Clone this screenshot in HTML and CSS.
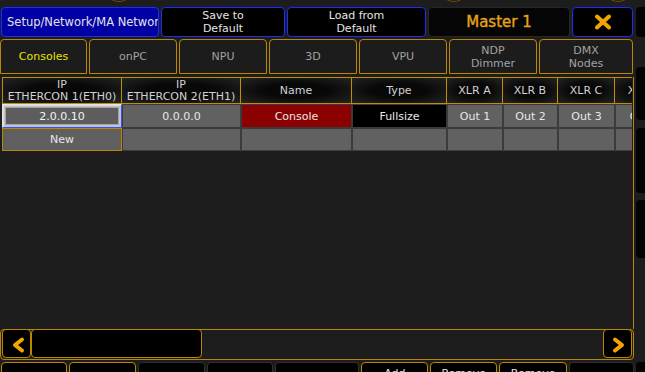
FILE: index.html
```html
<!DOCTYPE html>
<html lang="en">
<head>
    <meta charset="UTF-8">
    <title>Setup / Network / MA Network</title>
    <link rel="stylesheet" href="styles.css">
</head>
<body>
    <div class="screen">
        <div class="main">
            <div class="knobs">
                <span class="knob k1"></span>
                <span class="knob k2"></span>
                <span class="knob k3"></span>
            </div>

            <div class="titlebar">
                <div class="tbtn path">Setup/Network/MA Networ</div>
                <div class="tbtn save">Save to<br>Default</div>
                <div class="tbtn load">Load from<br>Default</div>
                <div class="tbtn master">Master 1</div>
                <div class="tbtn close">
                    <svg width="18" height="16" viewBox="0 0 18 16">
                        <path d="M3 2.5 L15 13.5 M15 2.5 L3 13.5" stroke="#f2a400" stroke-width="4" stroke-linecap="round"/>
                    </svg>
                </div>
            </div>

            <div class="tabs">
                <div class="tab active">Consoles</div>
                <div class="tab">onPC</div>
                <div class="tab">NPU</div>
                <div class="tab">3D</div>
                <div class="tab">VPU</div>
                <div class="tab">NDP<br>Dimmer</div>
                <div class="tab wide">DMX<br>Nodes</div>
            </div>

            <div class="panel">
                <div class="tablearea">
                    <div class="grid">
                        <div class="th first">IP<br>ETHERCON 1(ETH0)</div>
                        <div class="th">IP<br>ETHERCON 2(ETH1)</div>
                        <div class="th">Name</div>
                        <div class="th">Type</div>
                        <div class="th">XLR A</div>
                        <div class="th">XLR B</div>
                        <div class="th">XLR C</div>
                        <div class="th">XLR D</div>

                        <div class="td selected">2.0.0.10</div>
                        <div class="td">0.0.0.0</div>
                        <div class="td red">Console</div>
                        <div class="td black">Fullsize</div>
                        <div class="td">Out 1</div>
                        <div class="td">Out 2</div>
                        <div class="td">Out 3</div>
                        <div class="td">Out 4</div>

                        <div class="td new">New</div>
                        <div class="td"></div>
                        <div class="td"></div>
                        <div class="td"></div>
                        <div class="td"></div>
                        <div class="td"></div>
                        <div class="td"></div>
                        <div class="td"></div>
                    </div>
                </div>

                <div class="scroller">
                    <div class="sbtn left">
                        <svg width="29" height="29" viewBox="0 0 29 29">
                            <polyline points="19,9.5 12,15 19,20.5" fill="none" stroke="#f2a400" stroke-width="4" stroke-linecap="round" stroke-linejoin="round"/>
                        </svg>
                    </div>
                    <div class="thumb"></div>
                    <div class="track"></div>
                    <div class="sbtn right">
                        <svg width="29" height="29" viewBox="0 0 29 29">
                            <polyline points="11,9.5 18,15 11,20.5" fill="none" stroke="#f2a400" stroke-width="4" stroke-linecap="round" stroke-linejoin="round"/>
                        </svg>
                    </div>
                </div>
            </div>

            <div class="bottombar">
                <div class="bbtn lit"></div>
                <div class="bbtn lit w67"></div>
                <div class="bbtn w67"></div>
                <div class="bbtn"></div>
                <div class="bbtn w85"></div>
                <div class="bbtn lit w67">Add</div>
                <div class="bbtn lit w67">Remove</div>
                <div class="bbtn lit w68">Remove</div>
                <div class="bbtn w65"></div>
            </div>
        </div>

        <div class="side">
            <div class="sblock b1"></div>
            <div class="sblock b2"></div>
            <div class="sblock b3"></div>
            <div class="sblock b4"></div>
            <div class="sblock b5"></div>
        </div>
    </div>
</body>
</html>
```

FILE: styles.css
```css
body {
    margin: 0;
    width: 645px;
    height: 372px;
    overflow: hidden;
    background-color: #1d1d1d;
    font-family: "DejaVu Sans", sans-serif;
    font-size: 11px;
    color: #e0e0e0;
}
.screen {
    display: flex;
    height: 372px;
    overflow: hidden;
}
.main {
    width: 634px;
    display: flex;
    flex-direction: column;
}
.main > *,
.panel > *,
.side > * {
    flex-shrink: 0;
}

/* encoder rims peeking in from above */
.knobs {
    height: 7px;
    display: flex;
    overflow: hidden;
}
.knob {
    width: 18px;
    height: 10px;
    margin-top: -8px;
    border: 1px solid #6e4f0a;
    border-radius: 50%;
    box-sizing: border-box;
}
.k1 { margin-left: 110px; }
.k2 { margin-left: 317px; }
.k3 { margin-left: 146px; }

/* title bar */
.titlebar {
    height: 30px;
    display: flex;
    gap: 2px;
    padding-left: 1px;
}
.tbtn {
    box-sizing: border-box;
    height: 30px;
    border: 1px solid #1c2cff;
    border-radius: 4px;
    background: #000;
    display: flex;
    align-items: center;
    justify-content: center;
    text-align: center;
    line-height: 13px;
    color: #e4e4e4;
}
.path {
    width: 158px;
    background: #0000a4;
    justify-content: flex-start;
    padding-left: 5px;
    font-size: 11.5px;
    white-space: nowrap;
    overflow: hidden;
}
.save { width: 124px; }
.load { width: 139px; }
.master {
    width: 142px;
    border-color: #262626;
    background: #050505;
    color: #e3a21a;
    font-size: 15px;
    -webkit-text-stroke: 0.4px #e3a21a;
}
.close { width: 61px; }

/* tabs */
.tabs {
    height: 35px;
    margin-top: 2px;
    display: flex;
    gap: 2px;
}
.tab {
    box-sizing: border-box;
    width: 88px;
    border: 1px solid #b98800;
    border-radius: 4px 4px 0 0;
    background: #1c1c1c;
    display: flex;
    align-items: center;
    justify-content: center;
    text-align: center;
    line-height: 13px;
    color: #a2a2a2;
}
.tab.active {
    width: 87px;
    color: #e4e400;
}
.tab.wide { width: 94px; }

/* sheet */
.panel {
    margin-top: 3px;
    display: flex;
    flex-direction: column;
}
.tablearea {
    box-sizing: border-box;
    height: 252px;
    padding-left: 2px;
    padding-right: 1px;
    border-right: 1px solid #b98800;
    overflow: hidden;
}
.grid {
    display: grid;
    grid-template-columns: 120px 119px 111px 95px 56px 55px 57px 60px;
    grid-template-rows: 27px 24px 23px;
    width: 630px;
    overflow: hidden;
}
.th,
.td {
    box-sizing: border-box;
    display: flex;
    align-items: center;
    justify-content: center;
    text-align: center;
    white-space: nowrap;
    overflow: hidden;
}
.th {
    border-top: 1px solid #c08e00;
    border-bottom: 1px solid #c08e00;
    border-right: 1px solid #c08e00;
    background: radial-gradient(ellipse at center, #080808 40%, #242424 100%);
    color: #d2d2d2;
    line-height: 12px;
    padding-top: 1px;
}
.th.first { border-left: 1px solid #c08e00; }
.td {
    border: 1px solid #3b3b3b;
    background: #616161;
    color: #e8e8e8;
}
.td.red { background: #8b0000; }
.td.black { background: #000; }
.td.selected {
    border-left-color: #e6e6e6;
    border-top-color: #e6e6e6;
    border-right-color: #2e50ff;
    border-bottom-color: #2e50ff;
    background: #5d5d5d;
    box-shadow: inset 1px 1px 0 #d8d8d8, inset 0 0 0 2px #c4c4c4, inset 0 0 0 3px #a4a4a4;
    color: #f4f4f4;
}
.td.new {
    border-color: #b98800;
    background: #5f5f5f;
}

/* horizontal scroller */
.scroller {
    box-sizing: border-box;
    height: 31px;
    border: 1px solid #b98800;
    border-radius: 4px;
    display: flex;
}
.sbtn,
.thumb {
    box-sizing: border-box;
    height: 29px;
    margin-top: -1px;
    border: 1px solid #b98800;
    border-radius: 4px;
    background: #000;
}
.sbtn { width: 29px; }
.sbtn.left { margin-left: 1px; }
.sbtn.right { margin-right: 1px; }
.thumb { width: 171px; }
.track { flex: 1; }

/* executor bar */
.bottombar {
    margin-top: 2px;
    display: flex;
    gap: 2px;
    padding-left: 1px;
}
.bbtn {
    box-sizing: border-box;
    width: 66px;
    height: 20px;
    padding-top: 4px;
    border: 1px solid #2e2e2e;
    border-radius: 4px 4px 0 0;
    background: #000;
    text-align: center;
    line-height: 13px;
    color: #e2e2e2;
}
.bbtn.lit { border-color: #b98800; }
.bbtn.w65 { width: 65px; }
.bbtn.w67 { width: 67px; }
.bbtn.w68 { width: 68px; }
.bbtn.w85 { width: 85px; }

/* right edge strip */
.side {
    width: 9px;
    margin-left: 2px;
    display: flex;
    flex-direction: column;
}
.sblock {
    background: #030303;
    border-radius: 4px 0 0 4px;
}
.b1 { margin-top: 7px; height: 30px; }
.b2 { margin-top: 30px; height: 53px; }
.b3 { margin-top: 8px; height: 65px; }
.b4 { margin-top: 7px; height: 58px; }
.b5 { margin-top: 104px; height: 20px; border-radius: 4px 0 0 0; }
```
